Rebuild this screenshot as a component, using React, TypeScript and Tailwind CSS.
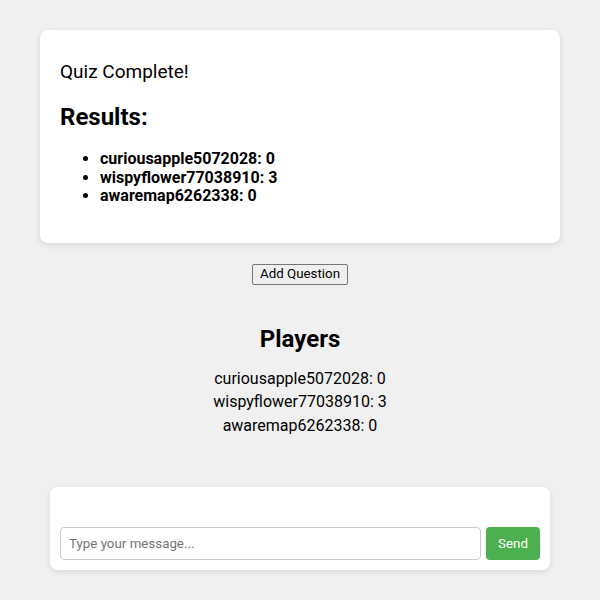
export default function App() {
  const players = [
    { name: "curiousapple5072028", score: 0 },
    { name: "wispyflower77038910", score: 3 },
    { name: "awaremap6262338", score: 0 },
  ];
  return (
    <div className="min-h-[600px] w-full bg-[#f0f0f0] text-black" style={{ fontFamily: "Roboto, 'Noto Sans', sans-serif" }}>
      <div className="flex flex-col items-center pt-[30px]">
        <div className="w-[520px] rounded-[8px] bg-white px-[20px] pt-[20px] pb-[37px] shadow-[0_2px_6px_rgba(0,0,0,0.1)]">
          <p className="mt-[11px] text-[19px] leading-[21px]">Quiz Complete!</p>
          <h2 className="mt-[21px] text-[24px] font-bold leading-[28px]">Results:</h2>
          <ul className="mt-[19px] list-disc pl-[40px] font-bold text-[16px] leading-[18.5px]">
            {players.map((p) => (
              <li key={p.name}>
                {p.name}: {p.score}
              </li>
            ))}
          </ul>
        </div>
        <button className="mt-[21px] h-[21px] rounded-[2px] border border-[#767676] bg-[#efefef] px-[7px] text-[13.33px] leading-[18px]">
          Add Question
        </button>
        <h2 className="mt-[40px] text-[24px] font-bold leading-[28px]">Players</h2>
        <div className="mt-[14px] flex flex-col items-center text-[16px] leading-[23.5px]">
          {players.map((p) => (
            <div key={p.name}>
              {p.name}: {p.score}
            </div>
          ))}
        </div>
        <div className="mt-[50px] w-[500px] rounded-[8px] bg-white px-[10px] pt-[40px] pb-[10px] shadow-[0_2px_6px_rgba(0,0,0,0.1)]">
          <div className="flex gap-[5px]">
            <input
              className="h-[33px] flex-1 rounded-[4px] border border-[#cccccc] px-[8px] text-[13.33px] outline-none placeholder:text-[#757575]"
              placeholder="Type your message..."
            />
            <button className="h-[33px] w-[54px] rounded-[4px] bg-[#4caf50] text-[13.33px] text-white">Send</button>
          </div>
        </div>
      </div>
    </div>
  );
}
